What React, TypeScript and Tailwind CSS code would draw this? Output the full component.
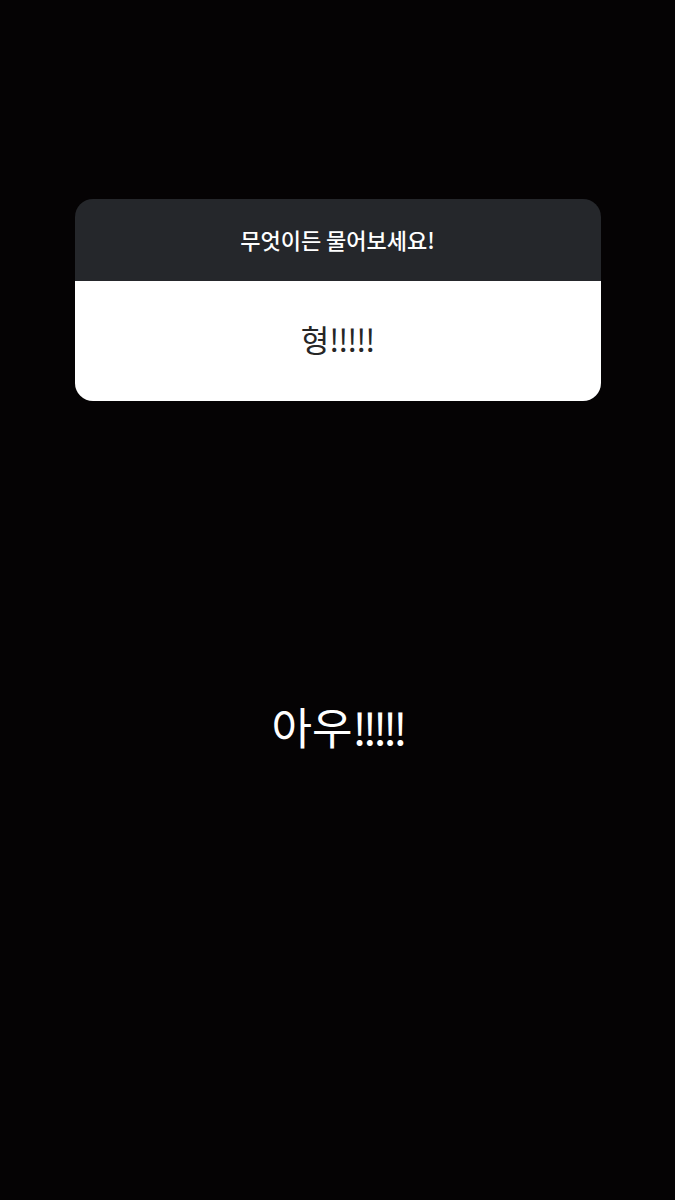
export default function App() {
  const font = { fontFamily: '"Noto Sans CJK KR", "Noto Sans", sans-serif' };
  return (
    <div className="w-[675px] h-[1200px] bg-[#050304] flex flex-col items-center" style={font}>
      <div className="mt-[199px] w-[526px] rounded-[18px] overflow-hidden">
        <div className="h-[82px] bg-[#25272b] flex items-center justify-center text-white text-[22px] font-medium leading-none pb-[3px]">
          무엇이든 물어보세요!
        </div>
        <div className="h-[120px] bg-white flex items-center justify-center text-[#262626] text-[31px] leading-none pb-[6px]">
          형<span className="tracking-[-1px]">!!!!!</span>
        </div>
      </div>
      <div className="mt-[303px] text-white text-[44px] leading-none">
        아우<span className="tracking-[-4px]">!!!!!</span>
      </div>
    </div>
  );
}
